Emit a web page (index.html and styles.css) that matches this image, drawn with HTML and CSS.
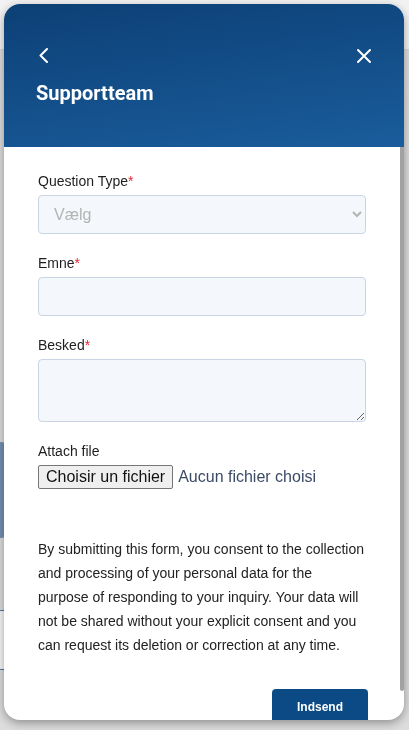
FILE: index.html
```html
<!DOCTYPE html>
<html lang="da">
<head>
<meta charset="utf-8">
<title>Supportteam</title>
<link rel="stylesheet" href="styles.css">
</head>
<body>
<div class="page">
  <div class="page-top"></div>
  <div class="page-main">
    <div class="illus"></div>
    <div class="illus-box"></div>
  </div>
</div>

<div class="widget">
  <header class="head">
    <div class="head-icons">
      <svg class="ico" width="16" height="16" viewBox="0 0 16 16" aria-hidden="true">
        <path d="M11 1 L4.5 7.5 L11 14" fill="none" stroke="#fff" stroke-width="2" stroke-linecap="round" stroke-linejoin="round"/>
      </svg>
      <svg class="ico" width="16" height="16" viewBox="0 0 16 16" aria-hidden="true">
        <path d="M2 2 L14 14 M14 2 L2 14" fill="none" stroke="#fff" stroke-width="2" stroke-linecap="round"/>
      </svg>
    </div>
    <h1 class="title">Supportteam</h1>
  </header>

  <main class="body">
    <form class="form">
      <div class="field">
        <label class="lbl">Question Type<span class="req">*</span></label>
        <select class="ctrl sel">
          <option>Vælg</option>
        </select>
      </div>
      <div class="field">
        <label class="lbl">Emne<span class="req">*</span></label>
        <input class="ctrl" type="text">
      </div>
      <div class="field">
        <label class="lbl">Besked<span class="req">*</span></label>
        <textarea class="ctrl area"></textarea>
      </div>
      <div class="field">
        <label class="lbl">Attach file</label>
        <div class="file-row">
          <span class="file-btn">Choisir un fichier</span>
          <span class="file-name">Aucun fichier choisi</span>
        </div>
      </div>
      <p class="consent">By submitting this form, you consent to the collection and processing of your personal data for the purpose of responding to your inquiry. Your data will not be shared without your explicit consent and you can request its deletion or correction at any time.</p>
      <div class="actions">
        <button type="button" class="submit">Indsend</button>
      </div>
    </form>
  </main>
  <div class="scroll-thumb"></div>
</div>
</body>
</html>
```

FILE: styles.css
```css
* { box-sizing: border-box; }
html, body { margin: 0; padding: 0; height: 100%; }
body {
  font-family: "Liberation Sans", Arial, sans-serif;
  background: #dcdcdc;
  overflow: hidden;
}
.page { height: 100%; }
.page-top {
  height: 50px;
  background: #f2f2f2;
  border-bottom: 1px solid #d6d6d6;
}
.page-main {
  padding-top: 392px;
}
.illus {
  width: 14px;
  height: 96px;
  margin-left: -6px;
  border-radius: 10px;
  background: #7590b3;
}
.illus-box {
  margin-top: 72px;
  width: 10px;
  height: 60px;
  margin-left: -4px;
  border: 1px solid #4f78a8;
  background: #f4f6f8;
}

.widget {
  position: fixed;
  top: 4px;
  left: 4px;
  right: 5px;
  bottom: 10px;
  display: flex;
  flex-direction: column;
  border-radius: 16px;
  overflow: hidden;
  background: #fff;
  box-shadow: 0 3px 10px rgba(0,0,0,0.35);
}
.head {
  flex: 0 0 143px;
  padding: 44px 32px 0 32px;
  background: linear-gradient(172deg, #0c4075 0%, #1a5c9c 100%);
  color: #fff;
}
.head-icons {
  display: flex;
  justify-content: space-between;
  height: 16px;
}
.ico { display: block; }
.title {
  margin: 17px 0 0 0;
  font-family: Roboto, "Liberation Sans", sans-serif;
  font-weight: 700;
  font-size: 20px;
  line-height: 24px;
}
.body {
  flex: 1 1 auto;
  overflow: hidden;
  margin-right: 4px;
  padding: 26px 34px 26px 34px;
}
.scroll-thumb {
  position: absolute;
  top: 143px;
  right: 0;
  width: 4px;
  height: 544px;
  background: #a2a2a2;
  border-radius: 0 0 2px 2px;
}

.field { margin-bottom: 21px; }
.lbl {
  display: block;
  font-size: 14px;
  line-height: 16px;
  color: #1e1e1e;
  margin-bottom: 6px;
}
.req { color: #e0282e; }
.ctrl {
  display: block;
  width: 100%;
  height: 39px;
  margin: 0;
  background: #f4f7fb;
  border: 1px solid #c9d5e4;
  border-radius: 4px;
  font-family: "Liberation Sans", Arial, sans-serif;
  font-size: 16px;
  color: #333;
  padding: 0 12px;
  outline: none;
}
.sel {
  color: #b4b4b4;
  padding-left: 11px;
}
.area {
  height: 63px;
  padding: 8px 12px;
  resize: vertical;
}
.file-row {
  display: flex;
  align-items: center;
  height: 24px;
  gap: 5px;
}
.file-btn {
  display: inline-block;
  height: 24px;
  line-height: 20px;
  padding: 1px 7px;
  font-size: 16px;
  color: #111;
  background: #efefef;
  border: 1px solid #767676;
  border-radius: 2px;
}
.file-name {
  font-size: 16px;
  color: #3b4a65;
}
.consent {
  margin: 48px 0 0 0;
  font-size: 14px;
  line-height: 24px;
  color: #222;
}
.actions {
  display: flex;
  justify-content: flex-end;
  margin-top: 32px;
  margin-right: -2px;
}
.submit {
  width: 96px;
  height: 36px;
  border: none;
  border-radius: 4px;
  background: #0b4a85;
  color: #fff;
  font-family: "Liberation Sans", Arial, sans-serif;
  font-weight: 700;
  font-size: 12px;
  cursor: pointer;
}
```
